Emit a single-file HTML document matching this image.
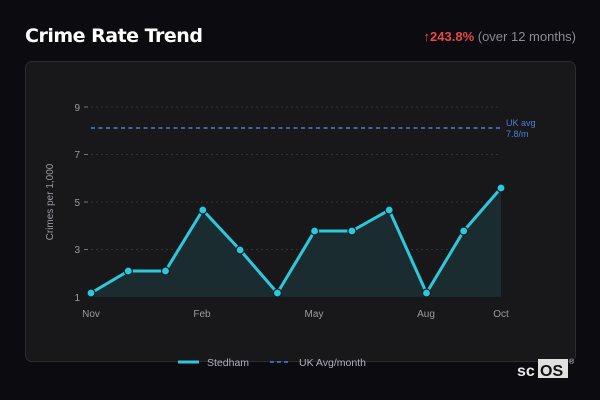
<!DOCTYPE html>
<html><head><meta charset="utf-8"><style>
body{margin:0;width:600px;height:400px;background:#0c0b10;font-family:"Liberation Sans",sans-serif;position:relative;overflow:hidden}
.t{position:absolute;left:25px;top:25px;color:#fff;font-size:19px;font-weight:bold;font-family:"DejaVu Sans","Liberation Sans",sans-serif;letter-spacing:-0.5px}
.r{position:absolute;right:24px;top:29px;font-size:13px;color:#8a8a92}
.r b{color:#e5484d}
.card{position:absolute;left:25px;top:61px;width:549px;height:299px;background:#18181b;border:1px solid #2c2c31;border-radius:7px}
svg{position:absolute;left:0;top:0}
</style></head><body>
<div class="t">Crime Rate Trend</div>
<div class="r"><b>↑243.8%</b> (over 12 months)</div>
<div class="card"></div>
<svg width="600" height="400" font-family="Liberation Sans,sans-serif">
<g stroke="#333338" stroke-dasharray="2 3" stroke-width="1">
<line x1="91" y1="107" x2="501" y2="107"/><line x1="91" y1="154.5" x2="501" y2="154.5"/><line x1="91" y1="202" x2="501" y2="202"/><line x1="91" y1="249.5" x2="501" y2="249.5"/>
</g>
<g fill="#9a9aa2" font-size="10" text-anchor="end">
<text x="80" y="111">9</text><text x="80" y="158">7</text><text x="80" y="206">5</text><text x="80" y="253">3</text><text x="80" y="301">1</text>
</g>
<g stroke="#777" stroke-width="1"><line x1="84" y1="107" x2="88" y2="107"/><line x1="84" y1="154.5" x2="88" y2="154.5"/><line x1="84" y1="202" x2="88" y2="202"/><line x1="84" y1="249.5" x2="88" y2="249.5"/></g>
<text x="53" y="202" fill="#9a9aa2" font-size="10" text-anchor="middle" transform="rotate(-90 53 202)">Crimes per 1,000</text>
<g fill="#9a9aa2" font-size="10" text-anchor="middle">
<text x="91" y="317">Nov</text><text x="202" y="317">Feb</text><text x="314" y="317">May</text><text x="426" y="317">Aug</text><text x="501" y="317">Oct</text>
</g>
<line x1="91" y1="128" x2="501" y2="128" stroke="#4a7fd6" stroke-width="1.6" stroke-dasharray="4 3.5"/>
<text x="506" y="126" fill="#4a7fd6" font-size="9">UK avg</text>
<text x="506" y="137" fill="#4a7fd6" font-size="9">7.8/m</text>
<polygon fill="#1b2c31" points="91,297 91,293 128.3,271 165.5,271 202.8,210 240.1,250 277.4,293 314.6,231 351.9,231 389.2,210 426.5,293 463.7,231 501,188 501,297"/>
<polyline fill="none" stroke="#2ec8dc" stroke-width="3" stroke-linejoin="round" points="91,293 128.3,271 165.5,271 202.8,210 240.1,250 277.4,293 314.6,231 351.9,231 389.2,210 426.5,293 463.7,231 501,188"/>
<g fill="#2ec8dc" stroke="#0f1f24" stroke-width="1.2">
<circle cx="91" cy="293" r="4"/><circle cx="128.3" cy="271" r="4"/><circle cx="165.5" cy="271" r="4"/><circle cx="202.8" cy="210" r="4"/><circle cx="240.1" cy="250" r="4"/><circle cx="277.4" cy="293" r="4"/><circle cx="314.6" cy="231" r="4"/><circle cx="351.9" cy="231" r="4"/><circle cx="389.2" cy="210" r="4"/><circle cx="426.5" cy="293" r="4"/><circle cx="463.7" cy="231" r="4"/><circle cx="501" cy="188" r="4"/>
</g>
<line x1="178" y1="362" x2="199" y2="362" stroke="#2ec8dc" stroke-width="3"/>
<text x="207" y="366" fill="#b0b0b8" font-size="10.5">Stedham</text>
<line x1="270" y1="362" x2="291" y2="362" stroke="#4a7fd6" stroke-width="1.6" stroke-dasharray="4 3"/>
<text x="299" y="366" fill="#b0b0b8" font-size="10.5">UK Avg/month</text>
<text x="517" y="376" fill="#e8e8e8" font-size="16" font-weight="bold">sc</text>
<rect x="538" y="359" width="30" height="19" fill="#e0e0e0"/>
<text x="540" y="376" fill="#111" font-size="16" font-weight="bold">OS</text>
<text x="569" y="364" fill="#ccc" font-size="7">®</text>
</svg>
</body></html>
